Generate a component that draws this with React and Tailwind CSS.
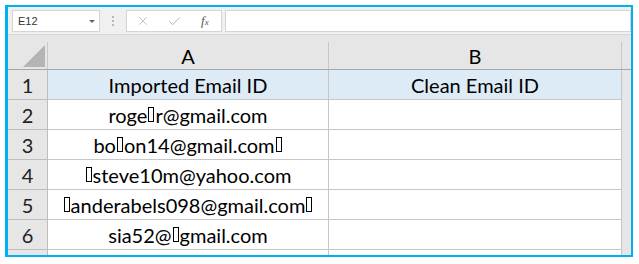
import { X, Check } from 'lucide-react'

const ROWS = [
  { n: 1, a: ['Imported Email ID'], b: 'Clean Email ID', head: true },
  { n: 2, a: ['roge', 0, 'r@gmail.com'] },
  { n: 3, a: ['bo', 0, 'on14@gmail.com', 0] },
  { n: 4, a: [0, 'steve10m@yahoo.com'] },
  { n: 5, a: [0, 'anderabels098@gmail.com', 0] },
  { n: 6, a: ['sia52@', 0, 'gmail.com'] },
]

// the unprintable characters show up as empty boxes
function Tofu() {
  return <span className="inline-block w-[6px] h-[15px] border border-black mx-[1px] align-[-1px]" />
}

export default function App() {
  return (
    <div className="w-[639px] h-[264px] bg-white pt-[5px] pl-[5px]" style={{ fontFamily: 'Lato, "Liberation Sans", sans-serif' }}>
      <div className="w-[628px] h-[252px] border-2 border-l-[3px] border-[#00b0f0] bg-[#e6e6e6] overflow-hidden flex flex-col">
        {/* Formula bar */}
        <div className="h-[28px] shrink-0 bg-[#f0f0f0] border-b border-[#d6d6d6] flex items-start pt-[3px] pl-[4px]">
          <div className="w-[88px] h-[22px] bg-white border border-[#d4d4d4] flex items-center justify-between pl-[5px] pr-[4px]">
            <span className="text-[11px] text-[#333]" style={{ fontFamily: '"Liberation Sans", sans-serif' }}>E12</span>
            <span className="w-0 h-0 border-l-[3px] border-r-[3px] border-t-[3px] border-l-transparent border-r-transparent border-t-[#666]" />
          </div>
          <div className="w-[26px] h-[22px] flex flex-col items-center justify-center gap-[2px]">
            <span className="w-[2px] h-[2px] bg-[#b8b8b8]" />
            <span className="w-[2px] h-[2px] bg-[#b8b8b8]" />
            <span className="w-[2px] h-[2px] bg-[#b8b8b8]" />
          </div>
          <div className="w-[96px] h-[22px] bg-white border border-[#d4d4d4] flex items-center pl-[9px]">
            <X size={14} strokeWidth={1.3} color="#b4b4b4" />
            <Check size={15} strokeWidth={1.6} color="#b4b4b4" className="ml-[17px]" />
            <span className="ml-[19px] text-[13px] italic text-[#555]" style={{ fontFamily: '"Liberation Serif", serif' }}>f<span className="text-[9px]">x</span></span>
          </div>
          <div className="ml-[3px] flex-1 h-[22px] bg-white border border-[#d4d4d4]" />
        </div>

        <div className="h-[7px] shrink-0" />

        {/* Column headers */}
        <div className="grid grid-cols-[40px_281px_293px_1fr] grid-rows-[27px] h-[28px] shrink-0 border-b border-[#a6a6a6] leading-none">
          <div className="relative border-r border-[#c8c8c8]">
            <svg className="absolute left-[15px] top-[3px]" width="22" height="22" viewBox="0 0 22 22">
              <polygon points="22,0 22,22 0,22" fill="#b4b4b4" />
            </svg>
          </div>
          <div className="border-r border-[#c8c8c8] flex items-center justify-center text-[20px] text-black">A</div>
          <div className="border-r border-[#c8c8c8] flex items-center justify-center text-[20px] text-black">B</div>
          <div />
        </div>

        {/* Rows */}
        {ROWS.map((r) => (
          <div key={r.n} className="grid grid-cols-[40px_281px_293px_1fr] grid-rows-[30px] h-[30px] shrink-0 leading-none">
            <div className="border-r border-b border-[#bdbdbd] flex items-center justify-center text-[20px] text-[#222]">{r.n}</div>
            <div className={`${r.head ? 'bg-[#ddebf7]' : 'bg-white'} border-r border-b border-[#c6c6c6] flex items-center justify-center text-[20px] text-black whitespace-nowrap`}>
              {r.a.map((p, i) => (p === 0 ? <Tofu key={i} /> : <span key={i}>{p}</span>))}
            </div>
            <div className={`${r.head ? 'bg-[#ddebf7]' : 'bg-white'} border-r border-b border-[#c6c6c6] flex items-center justify-center text-[20px] text-black`}>
              {r.b}
            </div>
            <div />
          </div>
        ))}
        <div className="grid grid-cols-[40px_281px_293px_1fr] h-[10px] shrink-0">
          <div className="border-r border-[#bdbdbd]" />
          <div className="bg-white border-r border-[#c6c6c6]" />
          <div className="bg-white border-r border-[#c6c6c6]" />
          <div />
        </div>
      </div>
    </div>
  )
}
